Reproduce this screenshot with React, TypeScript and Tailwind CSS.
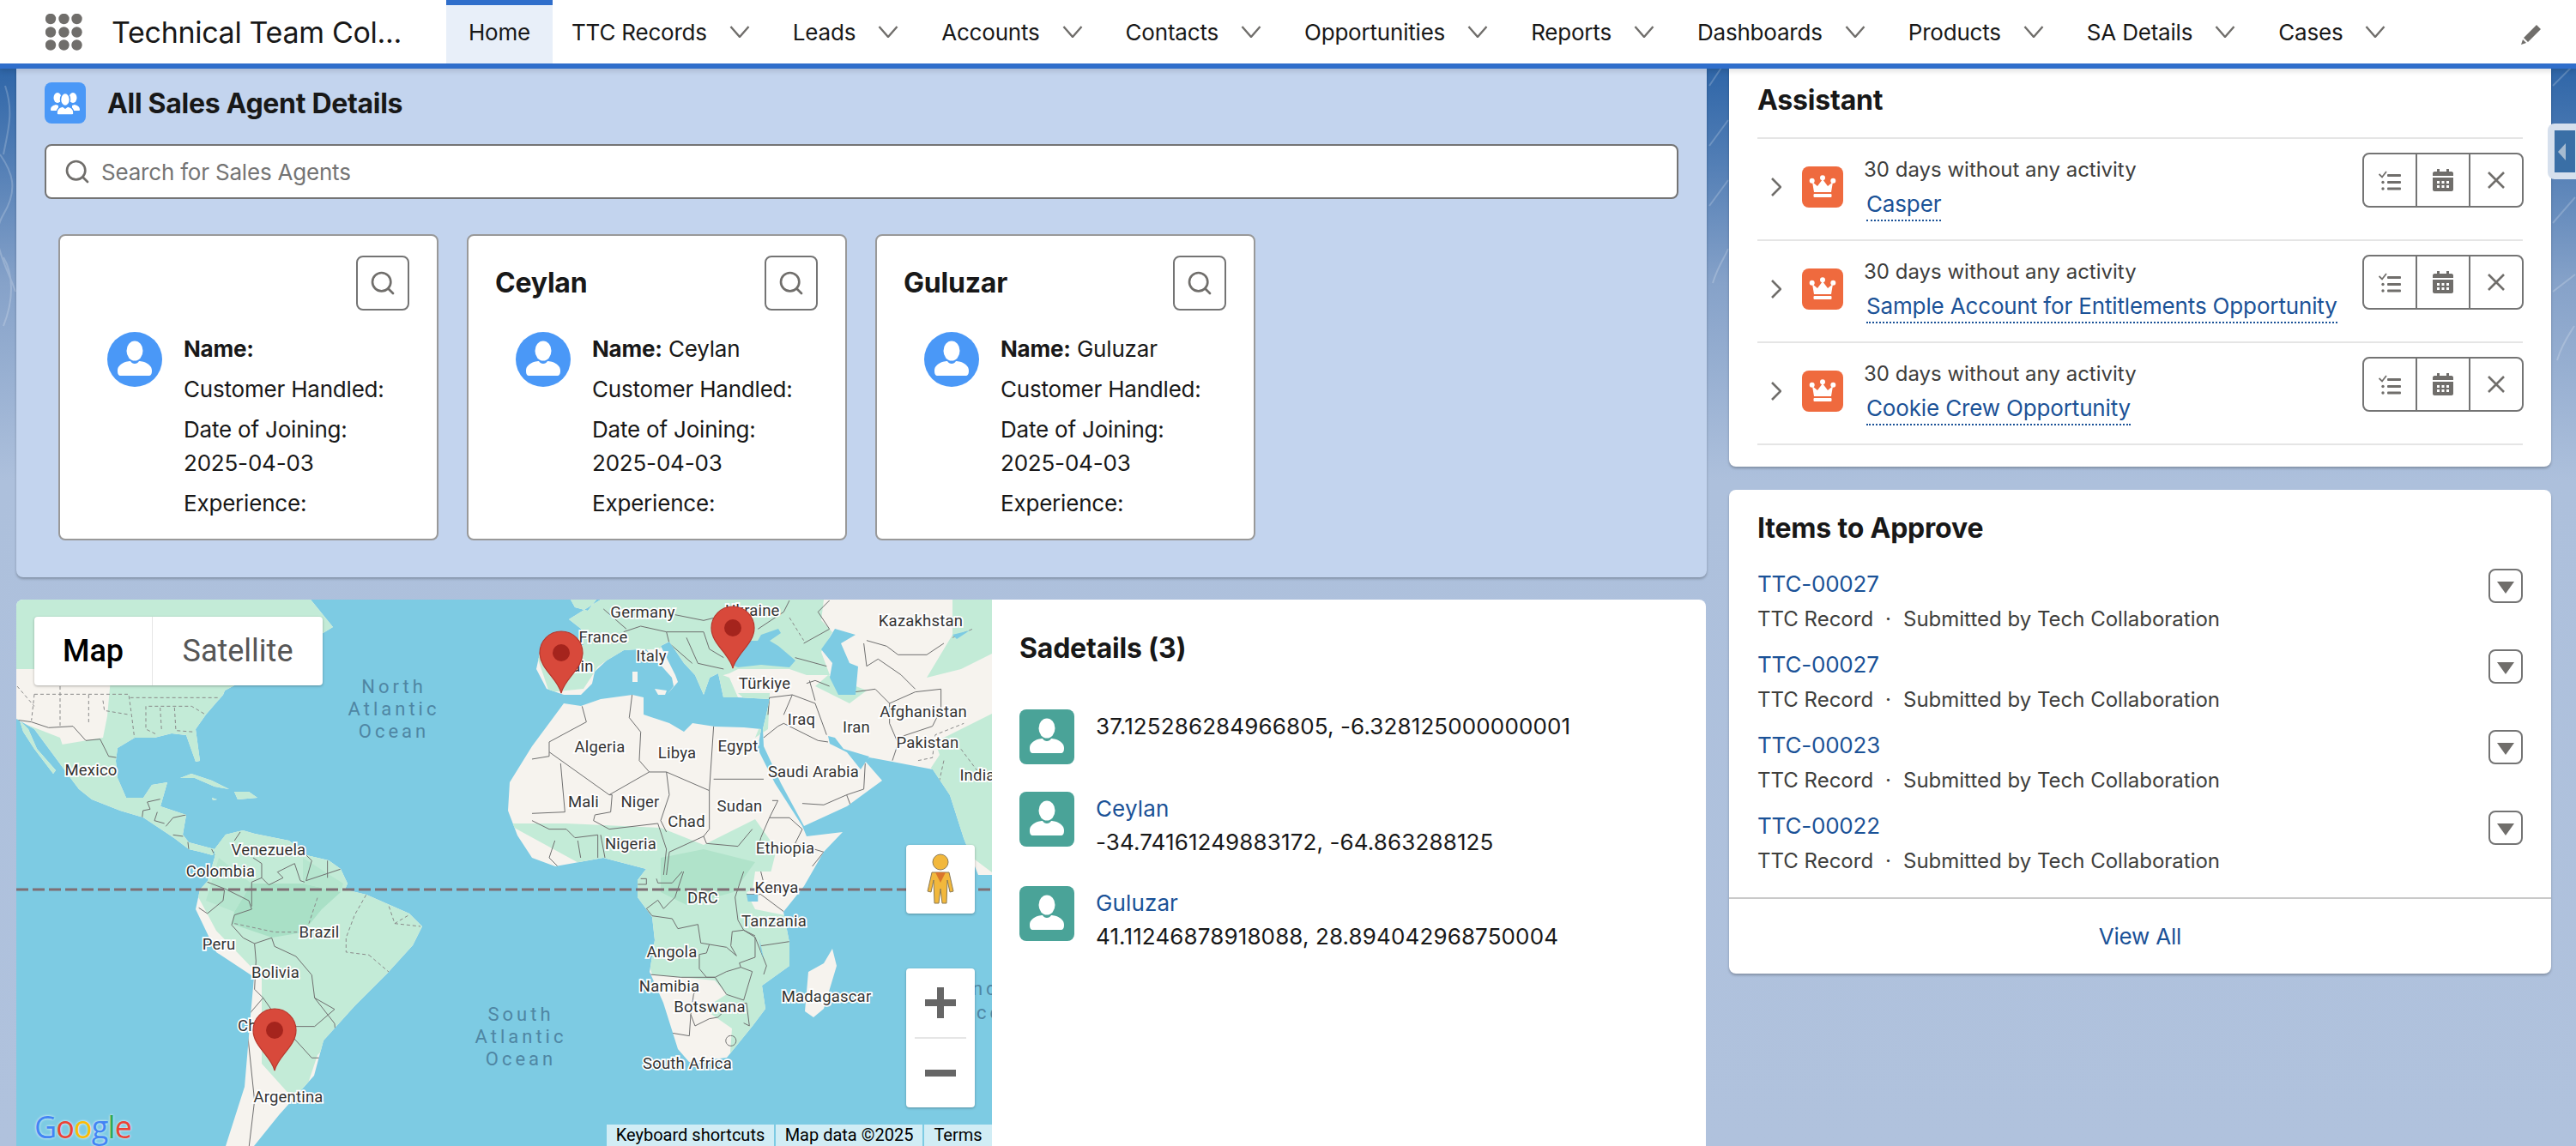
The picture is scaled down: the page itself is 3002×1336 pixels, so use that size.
import { Search } from "lucide-react"

const navItems = ["TTC Records", "Leads", "Accounts", "Contacts", "Opportunities", "Reports", "Dashboards", "Products", "SA Details", "Cases"]

const agents = [
  { name: "", label: "" },
  { name: "Ceylan", label: "Ceylan" },
  { name: "Guluzar", label: "Guluzar" },
]

const tasks = ["Casper", "Sample Account for Entitlements Opportunity", "Cookie Crew Opportunity"]

const approvals = ["TTC-00027", "TTC-00027", "TTC-00023", "TTC-00022"]

const mapLabels: [string, number, number][] = [
  ["Germany", 749, 713], ["Ukraine", 877, 711], ["Kazakhstan", 1073, 723], ["France", 703, 742],
  ["Italy", 759, 764], ["Spain", 668, 776], ["Türkiye", 891, 796], ["Afghanistan", 1076, 829],
  ["Iraq", 934, 838], ["Iran", 998, 847], ["Pakistan", 1081, 865], ["Algeria", 699, 870],
  ["Libya", 789, 877], ["Egypt", 860, 869], ["Saudi Arabia", 948, 899], ["India", 1139, 903],
  ["Mexico", 106, 897], ["Mali", 680, 934], ["Niger", 746, 934], ["Sudan", 862, 939],
  ["Chad", 800, 957], ["Nigeria", 735, 983], ["Ethiopia", 915, 988], ["Venezuela", 313, 990],
  ["Colombia", 257, 1015], ["Kenya", 905, 1034], ["DRC", 819, 1046], ["Tanzania", 902, 1073],
  ["Brazil", 372, 1086], ["Peru", 255, 1100], ["Angola", 783, 1109], ["Bolivia", 321, 1133],
  ["Namibia", 780, 1149], ["Madagascar", 963, 1161], ["Botswana", 827, 1173], ["Chile", 298, 1195],
  ["South Africa", 801, 1239], ["Argentina", 336, 1278],
]

const oceanLabels: [string, number, number][] = [
  ["North", 459, 800], ["Atlantic", 459, 826], ["Ocean", 459, 852],
  ["South", 607, 1182], ["Atlantic", 607, 1208], ["Ocean", 607, 1234],
  ["Indian", 1165, 1152], ["Ocean", 1160, 1180],
]

// land outlines, page coordinates
const landPath = [
  // north + central america
  "M19,699 L362,699 L388,731 L340,760 L290,790 L262,805 L260,810 L240,833 L228,850 L233,887 L228,888 L217,857 L200,855 L180,860 L157,860 L137,872 L135,887 L137,907 L147,930 L167,930 L177,915 L195,912 L187,940 L217,950 L213,973 L220,982 L250,990 L248,997 L233,993 L220,990 L203,977 L167,953 L140,945 L107,932 L92,920 L77,900 L40,850 L19,838 Z",
  "M23,840 L33,850 L43,873 L65,898 L62,902 L40,873 L27,853 Z",
  "M210,907 L223,902 L247,910 L267,920 L250,917 L227,907 Z M273,923 L290,923 L300,930 L277,932 Z M247,930 L253,932 L248,933 Z",
  // south america
  "M250,990 L263,973 L283,968 L297,972 L337,980 L357,997 L383,1003 L397,1013 L405,1030 L402,1037 L427,1043 L477,1065 L492,1080 L481,1102 L451,1135 L414,1172 L377,1213 L366,1254 L325,1300 L296,1336 L263,1336 L285,1267 L292,1184 L296,1139 L252,1110 L228,1060 L233,1037 L242,1027 L250,1000 Z",
  // africa
  "M657,820 L677,823 L700,815 L737,810 L750,813 L750,833 L780,843 L797,853 L807,843 L833,847 L867,848 L887,850 L883,873 L903,913 L935,963 L940,975 L982,970 L960,993 L937,1033 L913,1063 L920,1099 L920,1126 L888,1149 L892,1176 L877,1196 L847,1233 L803,1238 L790,1223 L773,1169 L757,1133 L763,1096 L760,1069 L743,1046 L743,1026 L753,1013 L703,1000 L647,1010 L620,1000 L603,974 L592,945 L594,912 L620,870 L640,843 Z",
  // eurasia
  "M700,699 L663,722 L677,733 L680,752 L630,757 L625,780 L637,803 L657,810 L677,810 L690,797 L693,783 L707,770 L727,758 L743,757 L753,757 L767,772 L783,790 L785,800 L777,810 L790,795 L787,787 L777,767 L770,753 L780,748 L797,773 L810,787 L820,810 L827,790 L837,785 L843,813 L860,813 L897,815 L893,833 L889,850 L890,870 L910,913 L937,963 L987,940 L1028,910 L1008,887 L1013,883 L1040,888 L1087,897 L1107,927 L1123,977 L1140,1020 L1160,1020 L1160,699 Z",
  // islands
  "M970,1106 L975,1126 L960,1176 L948,1186 L938,1179 L942,1133 L960,1123 Z",
  "M737,783 L743,783 L743,795 L737,795 Z M763,803 L777,805 L775,810 L767,810 Z",
  "M665,699 L695,699 L685,712 L670,708 Z",
].join(" ")

// europe, africa north, middle east (origin 620,700 at 3x)
const bordersNorth = [
  "M60,530 L270,680 L410,600 L470,600 L620,665 L635,440",
  "M100,570 L115,740 L0,745",
  "M0,555 L60,545 L60,530",
  "M270,680 L280,680 L275,740 L220,750 L215,770 L270,800 L440,780",
  "M470,600 L480,680 L450,770 L470,810",
  "M620,665 L620,800 L600,825 L610,850 L720,860 L770,800",
  "M635,625 L810,625",
  "M350,330 L340,410 L380,460 L375,560 L410,600",
  "M175,370 L190,425 L60,495 L60,530",
  "M840,700 L860,700 L830,760 L800,830 L790,870",
  "M830,760 L900,760 L945,800 L920,850 L1020,880 L980,930",
  "M0,770 L60,800 L120,800 L150,830 L230,820 L230,900",
  "M80,840 L60,900 L90,930", "M160,840 L170,900", "M240,820 L255,900",
  "M440,780 L470,870 L460,960", "M600,825 L480,880 L470,960",
  "M945,710 L1020,715 L1100,680 L1115,720", "M1100,680 L1160,660 L1165,570",
  "M810,480 L860,440 L880,430 L1000,490 L1035,495",
  "M830,340 L910,330 L990,360 L1030,470", "M830,340 L825,400", "M880,400 L910,330",
  "M970,280 L990,350", "M1130,320 L1200,310 L1250,360 L1250,430 L1280,500 L1260,560",
  "M1250,360 L1340,320 L1430,310 L1430,380 L1400,440 L1280,480",
  "M1160,150 L1170,230 L1210,205 L1290,260 L1340,310",
  "M1170,140 L1240,160 L1280,190 L1380,190 L1440,150",
  "M960,290 L990,280 L1040,300",
  "M320,110 L380,90 L470,110 L600,110 L620,170 L670,200",
  "M470,110 L480,150 L560,220", "M540,130 L580,220 L670,240",
  "M250,30 L330,100", "M500,50 L600,70 L640,60", "M790,100 L880,40 L900,0",
  "M950,150 L1040,100 L1000,40 L1040,0", "M920,200 L1030,230",
]

const dashedNorth = ["M1350,560 L1400,550 L1410,470 L1510,430", "M1470,130 L1540,100", "M900,60 L950,140", "M1440,560 L1420,650", "M1500,520 L1560,600"]

// mexico, central america, south america (origin 20,800)
const bordersWest = [
  "M0,118 L50,125 L110,145 L195,140 L240,190 L290,185 L320,245 L350,250",
  "M500,395 L455,405 L465,430 L440,435 L437,460", "M490,440 L480,470 L515,480",
  "M590,450 L545,460 L520,490", "M545,520 L580,525", "M597,545 L600,572", "M680,570 L690,590",
  "M665,685 L730,710 L810,750 L820,780 L760,800 L750,835 L790,880 L830,900",
  "M780,510 L760,540",
  "M825,600 L855,620 L855,670 L820,685 L820,770",
  "M855,670 L880,695 L930,670 L910,650 L970,620 L990,680 L1005,685",
  "M1010,590 L1030,610 L1010,680 L1130,640", "M1085,610 L1085,670",
  "M725,712 L720,750 L665,795 L635,775",
  "M890,880 L830,900 L835,960", "M890,880 L900,910 L975,945",
  "M975,945 L1030,1010 L1040,1090 L1110,1180 L1120,1300",
  "M835,960 L830,1060 L860,1090 L800,1160 L830,1450 L800,1700",
  "M1040,1090 L1110,1130 L1040,1190 L930,1190 L860,1090",
  "M930,1190 L1030,1300 L1120,1300",
]

const dashedWest = [
  "M60,28 L390,28 L400,100 L410,180", "M150,0 L150,140", "M250,30 L250,130",
  "M300,50 L305,85 L395,100", "M460,70 L610,70 L660,100", "M395,40 L710,40",
  "M450,70 L450,150 L490,170", "M500,75 L505,155", "M550,75 L555,155 L620,160",
  "M760,830 L900,860 L1000,860", "M1050,740 L1020,830", "M1220,730 L1180,800 L1150,880 L1150,930 L1230,940",
  "M1300,770 L1320,830 L1370,800", "M1320,830 L1410,840", "M1230,940 L1300,1000 L1350,1150",
  "M60,28 L50,120", "M0,0 L60,70",
]

// southern africa (origin 620,1016)
const bordersSouth = [
  "M380,25 L400,25 L400,45 L370,45", "M435,25 L440,40 L490,40 L525,0",
  "M530,0 L500,90 L460,130 L440,100 L400,130 L420,155",
  "M420,155 L490,165 L510,200 L580,185 L590,250 L620,255 L610,285 L585,290 L585,340 L610,370 L640,370 L680,430 L740,450 L770,350 L730,335 L725,320 L780,300 L780,230 L740,205 L700,210 L695,260 L715,295 L680,265 L620,255",
  "M410,360 L520,370 L640,370", "M570,420 L565,430 L555,500 L550,575 L490,565",
  "M555,500 L570,540 L620,515 L650,510 L690,470 L750,460 L760,540 L740,530",
  "M730,335 L680,350 L640,370", "M780,230 L820,330 L810,360", "M800,260 L900,245",
  "M740,0 L710,90 L720,170 L740,205 L780,225", "M750,80 L800,80 L880,140", "M800,0 L810,40",
  "M695,574 a18,18 0 1,0 1,0",
]

function Chevron() {
  return (
    <svg viewBox="0 0 24 14" className="w-6 h-[14px] shrink-0" fill="none" stroke="#706e6b" strokeWidth="2.4">
      <path d="M1.5 1 L12 13 L22.5 1" />
    </svg>
  )
}

function AppGrid() {
  const pts = [6, 21.5, 36.5]
  return (
    <svg viewBox="0 0 43 43" className="w-[43px] h-[43px]" fill="#706e6b">
      {pts.map((y) => pts.map((x) => <circle key={`${x}-${y}`} cx={x} cy={y} r="6.2" />))}
    </svg>
  )
}

function PersonGlyph({ className }: { className: string }) {
  return (
    <svg viewBox="0 0 64 64" className={className} fill="#fff">
      <ellipse cx="32" cy="22" rx="9.5" ry="11.5" />
      <path d="M12 45c0-5 4-8 9-10 3-1 5-1 6-1 1 2 3 3 5 3s4-1 5-3c1 0 3 0 6 1 5 2 9 5 9 10 0 4-1 6-4 6H16c-3 0-4-2-4-6z" />
    </svg>
  )
}

function GroupGlyph() {
  return (
    <svg viewBox="0 0 48 48" className="w-12 h-12" fill="#fff">
      <ellipse cx="15" cy="18" rx="4.5" ry="6" />
      <ellipse cx="33" cy="18" rx="4.5" ry="6" />
      <path d="M7 32c0-4 3-5 6-6l3 1v6H9c-1 0-2 0-2-1zM41 32c0-4-3-5-6-6l-3 1v6h7c1 0 2 0 2-1z" />
      <ellipse cx="24" cy="20" rx="5.5" ry="7.5" stroke="#4a98f7" strokeWidth="1.5" />
      <path d="M14 36c0-6 4-7 7-8l3 2 3-2c3 1 7 2 7 8 0 2-1 2-2 2H16c-1 0-2 0-2-2z" stroke="#4a98f7" strokeWidth="1.5" />
    </svg>
  )
}

function Crown() {
  return (
    <svg viewBox="0 0 48 48" className="w-12 h-12" fill="#fff">
      <circle cx="11.7" cy="16.7" r="3" />
      <circle cx="24" cy="13.3" r="3" />
      <circle cx="36.3" cy="16.7" r="3" />
      <path d="M12 18l6 5 6-8 6 8 6-5-2 12H14z" />
      <rect x="13.5" y="32" width="21" height="4" rx="1" />
    </svg>
  )
}

function TaskIcon() {
  return (
    <svg viewBox="0 0 26 23" className="w-[26px] h-[23px]" fill="#706e6b">
      <path d="M0.5 4l3.5 3.5L9 1" fill="none" stroke="#706e6b" strokeWidth="1.8" />
      <rect x="10" y="4" width="16" height="3" rx="1" />
      <rect x="10" y="12" width="16" height="3" rx="1" />
      <rect x="10" y="19.5" width="16" height="3" rx="1" />
      <circle cx="5" cy="13.5" r="1.7" />
      <circle cx="5" cy="21" r="1.7" />
    </svg>
  )
}

function CalendarIcon() {
  return (
    <svg viewBox="0 0 24 26" className="w-6 h-[26px]" fill="#706e6b">
      <rect x="5" y="0" width="3" height="4" />
      <rect x="16" y="0" width="3" height="4" />
      <path d="M0 5c0-1 1-2 2-2h20c1 0 2 1 2 2v3H0z" />
      <path fillRule="evenodd" d="M0 10h24v14c0 1-1 2-2 2H2c-1 0-2-1-2-2zM5 14v3h3v-3zm5.5 0v3h3v-3zm5.5 0v3h3v-3zM5 19v3h3v-3zm5.5 0v3h3v-3zm5.5 0v3h3v-3z" />
    </svg>
  )
}

function CloseIcon() {
  return (
    <svg viewBox="0 0 20 20" className="w-5 h-5" fill="none" stroke="#706e6b" strokeWidth="2.6">
      <path d="M1 1l18 18M19 1L1 19" />
    </svg>
  )
}

function Pin({ x, y }: { x: number; y: number }) {
  return (
    <svg viewBox="0 0 52 74" className="absolute w-[52px] h-[74px]" style={{ left: x, top: y }}>
      <path d="M26 73C22 56 1 45 1 26a25 25 0 0 1 50 0c0 19-21 30-25 47z" fill="#d8493b" stroke="#b8362c" strokeWidth="1.2" />
      <ellipse cx="26" cy="26" rx="10" ry="10" fill="#a5241d" />
    </svg>
  )
}

function BorderLines({ lines, dashed }: { lines: string[]; dashed?: boolean }) {
  return (
    <>
      {lines.map((d, i) => (
        <path key={i} d={d} fill="none" stroke={dashed ? "#8a8a8a" : "#6f6f6f"} strokeWidth="1" strokeDasharray={dashed ? "4 3" : undefined} vectorEffect="non-scaling-stroke" />
      ))}
    </>
  )
}

function WorldMap() {
  return (
    <svg viewBox="0 0 1137 637" className="absolute inset-0 w-[1137px] h-[637px]">
      <defs>
        <clipPath id="land"><path d={landPath} /></clipPath>
      </defs>
      <rect width="1137" height="637" fill="#7dcbe3" />
      <g transform="translate(-19,-699)">
        <path d={landPath} fill="#f6f3ee" />
        <g clipPath="url(#land)">
          {/* north + central america */}
          <path fill="#c3ebd7" d="M19,699 L400,699 L400,1000 L200,1000 L90,930 L60,870 L120,860 L125,835 L130,780 L19,780 Z" />
          <path fill="#c3ebd7" d="M19,840 L70,860 L90,920 L60,910 Z" />
          {/* south america */}
          <path fill="#c3ebd7" d="M250,960 L500,1040 L500,1100 L370,1230 L350,1290 L305,1240 L305,1140 L252,1085 L228,1040 Z" />
          <path fill="#a9e0c6" d="M293,1030 L353,1030 L397,1040 L375,1060 L353,1087 L317,1093 L270,1077 L273,1063 Z" />
          <path fill="#b6e6cf" d="M255,1000 L293,1030 L273,1063 L240,1050 Z M353,1000 L400,1030 L397,1040 L353,1030 Z" />
          {/* africa */}
          <path fill="#c3ebd7" d="M590,960 L660,960 L770,965 L820,985 L880,955 L905,990 L895,1030 L870,1040 L880,1060 L930,1070 L930,1240 L850,1240 L853,1199 L820,1176 L847,1159 L833,1143 L760,1136 L730,1040 L700,1020 Z" />
          <path fill="#b0e3ca" d="M770,1000 L820,990 L880,1005 L855,1040 L800,1055 L770,1040 Z" />
          <path fill="#f6f3ee" d="M880,1016 L930,1016 L925,1045 L890,1060 L875,1050 Z" />
          {/* eurasia */}
          <path fill="#c3ebd7" d="M640,699 L960,699 L957,723 L970,737 L957,760 L967,787 L940,787 L920,780 L860,780 L850,785 L833,790 L820,810 L807,793 L780,750 L767,757 L747,757 L707,770 L697,777 L680,803 L640,807 L623,757 Z" />
          <path fill="#c3ebd7" d="M837,785 L850,790 L860,813 L843,815 Z M860,808 L897,808 L895,850 L880,860 L890,835 Z" />
          <path fill="#c3ebd7" d="M1110,699 L1160,699 L1160,760 L1120,780 L1080,790 L1110,740 Z" />
          <path fill="#c3ebd7" d="M1090,865 L1160,830 L1160,1020 L1120,990 L1095,925 L1085,895 L1095,880 Z" />
          <path fill="#c3ebd7" d="M965,787 L1010,805 L990,820 L950,800 Z" />
        </g>
        {/* borders stay on land */}
        <g clipPath="url(#land)">
          <g transform="translate(620,700) scale(.3333)">
            <BorderLines lines={bordersNorth} />
            <BorderLines lines={dashedNorth} dashed />
          </g>
          <g transform="translate(20,800) scale(.3333)">
            <BorderLines lines={bordersWest} />
            <BorderLines lines={dashedWest} dashed />
          </g>
          <g transform="translate(620,1016) scale(.3333)">
            <BorderLines lines={bordersSouth} />
            <path d="M750,80 L790,80 L790,105 L755,105 Z M795,235 L810,305 L800,280 Z" fill="#7dcbe3" />
          </g>
        </g>
        {/* seas */}
        <path fill="#7dcbe3" d="M853,775 L847,757 L860,747 L883,747 L887,740 L907,733 L910,738 L897,747 L907,753 L927,770 L920,778 L887,775 L860,778 Z" />
        <path fill="#7dcbe3" d="M973,733 L997,740 L980,750 L990,773 L1000,777 L997,810 L977,810 L967,790 L970,773 L957,757 L967,743 Z" />
        <path fill="#7dcbe3" d="M965,858 L973,860 L983,873 L1013,882 L1003,897 L987,877 L967,867 Z" />
        <path fill="#7dcbe3" d="M1110,740 L1130,735 L1115,745 Z" />
      </g>
      <line x1="0" x2="1137" y1="338" y2="338" stroke="#7f6f74" strokeWidth="3" strokeDasharray="14 5" />
      <g fontFamily="Roboto, sans-serif" fontSize="18.5" textAnchor="middle" fill="#333" stroke="#fff" strokeWidth="3.5" paintOrder="stroke" letterSpacing="0.2">
        {mapLabels.map(([t, x, y]) => (
          <text key={t} x={x - 19} y={y - 699 + 7}>{t}</text>
        ))}
      </g>
      <g fontFamily="Roboto, sans-serif" fontSize="22" textAnchor="middle" fill="#4f86a3" letterSpacing="4">
        {oceanLabels.map(([t, x, y]) => (
          <text key={`${t}-${x}-${y}`} x={x - 19} y={y - 699 + 8}>{t}</text>
        ))}
      </g>
    </svg>
  )
}

function AgentCard({ name, label }: { name: string; label: string }) {
  return (
    <div className="w-[443px] h-[357px] bg-white border-2 border-[#999] rounded-lg shrink-0">
      <div className="flex justify-between items-center pt-[23px] pl-[31px] pr-[32px]">
        <h3 className="text-[32px] leading-10 font-bold text-[#181818]">{name}</h3>
        <button className="w-[62px] h-[64px] flex items-center justify-center border-2 border-[#747474] rounded-lg bg-white">
          <Search className="w-8 h-8 text-[#706e6b]" strokeWidth={2} />
        </button>
      </div>
      <div className="flex mt-[25px] pl-[55px]">
        <div className="w-16 h-16 rounded-full bg-[#4a98f7] shrink-0">
          <PersonGlyph className="w-16 h-16" />
        </div>
        <div className="ml-[25px] flex flex-col gap-2 text-[26px] leading-[39px] text-[#181818] whitespace-nowrap">
          <p><b className="font-bold">Name:</b>{label && ` ${label}`}</p>
          <p>Customer Handled:</p>
          <p>Date of Joining:<br />2025-04-03</p>
          <p>Experience:</p>
        </div>
      </div>
    </div>
  )
}

export default function App() {
  return (
    <div className="relative w-[3002px] h-[1336px] overflow-hidden bg-[linear-gradient(180deg,#2f66a8_80px,#4f7cb4_180px,#86a2c9_330px,#adc0dc_560px,#b0c2dd_100%)] [font-family:Inter,sans-serif] tracking-[-0.2px] text-[#181818]">
      <svg className="absolute inset-0 w-full h-[500px] opacity-20" viewBox="0 0 3002 500" fill="none" stroke="#fff" strokeWidth="2">
        <path d="M0 180c14 20 22 40 4 70s4 60 14 90M6 100c10 30 4 50-2 80M4 300c12 20 12 50 0 80" />
        <path d="M1992 100l20-30M1992 170l22-30M1992 240l22-30M1996 330c6-20 14-30 18-40" />
        <path d="M2975 100l24-24M2975 260l26-30M2975 340l26-20M2980 420c6-20 14-30 20-40" />
      </svg>

      {/* top nav */}
      <header className="relative z-10 h-20 bg-white border-b-[6px] border-[#2f6ecb] flex items-stretch shadow-[0_3px_6px_rgba(0,0,0,.12)]">
        <div className="w-[520px] shrink-0 flex items-center pl-[53px]">
          <AppGrid />
          <span className="ml-[34px] text-[34px] tracking-[-0.3px] text-[#181818] whitespace-nowrap">Technical Team Col...</span>
        </div>
        <div className="w-[124px] shrink-0 bg-[#e8eff9] border-t-[6px] border-[#2f6ecb] flex items-center justify-center text-[26px] pb-[6px]">Home</div>
        <nav className="flex items-center pl-[22px] text-[26px] whitespace-nowrap">
          {navItems.map((item) => (
            <div key={item} className="flex items-center gap-[26px] mr-[50px]">
              <span>{item}</span>
              <Chevron />
            </div>
          ))}
        </nav>
        <svg viewBox="0 0 26 26" className="absolute left-[2937px] top-[27px] w-[26px] h-[26px]" fill="#706e6b">
          <path d="M19 2l5 5L9 22l-5-5zM3 19l4 4-6 2z" />
        </svg>
      </header>

      {/* docked utility tab */}
      <div className="absolute z-10 left-[2969px] top-[144px] w-[40px] h-[65px] rounded-l-lg border-[8px] border-[#f2f5f9d9] bg-[#3a6fa6] flex items-center pl-1">
        <div className="w-0 h-0 border-y-[10px] border-y-transparent border-r-[9px] border-r-[#a6bbd0]" />
      </div>

      <main className="relative flex pl-[19px] gap-[26px]">
        <div className="w-[1970px] shrink-0 flex flex-col gap-[26px]">
          {/* sales agents */}
          <section className="h-[593px] bg-[#c3d4ee] rounded-b-lg shadow-[0_2px_3px_rgba(0,0,0,.25)] pt-4 pl-[33px] pr-[33px]">
            <div className="flex items-center gap-[25px]">
              <div className="w-12 h-12 rounded-lg bg-[#4a98f7]">
                <GroupGlyph />
              </div>
              <h2 className="mt-[2px] text-[32px] leading-10 font-bold tracking-[-0.3px]">All Sales Agent Details</h2>
            </div>
            <div className="mt-6 h-16 bg-white border-2 border-[#747474] rounded-lg flex items-center pl-5">
              <Search className="w-8 h-8 text-[#706e6b]" strokeWidth={2} />
              <span className="ml-3 text-[26px] text-[#747474]">Search for Sales Agents</span>
            </div>
            <div className="mt-[41px] pl-4 flex gap-[33px]">
              {agents.map((a) => (
                <AgentCard key={a.name || "blank"} name={a.name} label={a.label} />
              ))}
            </div>
          </section>

          {/* map and list */}
          <section className="h-[637px] w-[1969px] flex bg-white rounded-t-lg overflow-hidden">
            <div className="relative w-[1137px] shrink-0 overflow-hidden tracking-normal [font-family:Roboto,sans-serif]">
              <WorldMap />
              <Pin x={609} y={36} />
              <Pin x={809} y={7} />
              <Pin x={275} y={476} />
              <div className="absolute left-[21px] top-[20px] h-20 flex bg-white rounded-sm shadow-[0_1px_3px_rgba(0,0,0,.3)] text-[36px]">
                <div className="w-[138px] flex items-center justify-center font-medium text-black border-r border-[#e6e6e6]">Map</div>
                <div className="w-[198px] flex items-center justify-center text-[#565656]">Satellite</div>
              </div>
              <div className="absolute left-[1037px] top-[286px] w-20 h-20 bg-white rounded-sm shadow-[0_1px_3px_rgba(0,0,0,.3)] flex items-center justify-center">
                <svg viewBox="0 0 36 60" className="w-9 h-[60px]" fill="#f2b83c" stroke="#8a7a55" strokeWidth="1">
                  <circle cx="18" cy="10" r="9" />
                  <path d="M8 22h20l5 22-4 1-3-14-1 27h-5l-2-17-2 17h-5L10 31 7 45l-4-1z" />
                  <path d="M12 22h12l-6 12z" fill="#d9752c" stroke="none" />
                </svg>
              </div>
              <div className="absolute left-[1037px] top-[430px] w-20 h-[162px] bg-white rounded-sm shadow-[0_1px_3px_rgba(0,0,0,.3)] flex flex-col items-center">
                <div className="h-20 w-full flex items-center justify-center">
                  <svg viewBox="0 0 36 36" className="w-9 h-9" fill="#666"><path d="M14 0h8v14h14v8H22v14h-8V22H0v-8h14z" /></svg>
                </div>
                <div className="w-[60px] h-[2px] bg-[#e6e6e6]" />
                <div className="h-20 w-full flex items-center justify-center">
                  <svg viewBox="0 0 36 8" className="w-9 h-2" fill="#666"><rect width="36" height="8" /></svg>
                </div>
              </div>
              <div className="absolute left-[21px] bottom-[2px] text-[36px] leading-10 font-medium tracking-tight [font-family:'Open_Sans',sans-serif] [text-shadow:0_0_3px_#fff]">
                <span className="text-[#4285f4]">G</span>
                <span className="text-[#ea4335]">o</span>
                <span className="text-[#fbbc05]">o</span>
                <span className="text-[#4285f4]">g</span>
                <span className="text-[#34a853]">l</span>
                <span className="text-[#ea4335]">e</span>
              </div>
              <div className="absolute right-0 bottom-0 h-[25px] flex gap-[2px] text-[20px] leading-[25px] text-black">
                <span className="bg-[#ffffffa6] w-[195px] text-center">Keyboard shortcuts</span>
                <span className="bg-[#ffffffa6] w-[171px] text-center">Map data ©2025</span>
                <span className="bg-[#ffffffa6] w-[79px] text-center">Terms</span>
              </div>
            </div>
            <div className="flex-1 pl-8 pt-[37px] tracking-normal">
              <h2 className="text-[32px] leading-10 font-bold tracking-[-0.2px]">Sadetails (3)</h2>
              <div className="mt-[51px] flex flex-col text-[26px] leading-[39px] tracking-[0.12px]">
                <div className="h-[96px] flex gap-[25px]">
                  <div className="w-16 h-16 rounded-lg bg-[#4aa398]"><PersonGlyph className="w-16 h-16" /></div>
                  <p>37.125286284966805, -6.328125000000001</p>
                </div>
                <div className="h-[110px] flex gap-[25px]">
                  <div className="w-16 h-16 rounded-lg bg-[#4aa398]"><PersonGlyph className="w-16 h-16" /></div>
                  <p>
                    <a className="text-[#1b5297]">Ceylan</a><br />-34.74161249883172, -64.863288125
                  </p>
                </div>
                <div className="h-[110px] flex gap-[25px]">
                  <div className="w-16 h-16 rounded-lg bg-[#4aa398]"><PersonGlyph className="w-16 h-16" /></div>
                  <p>
                    <a className="text-[#1b5297]">Guluzar</a><br />41.11246878918088, 28.894042968750004
                  </p>
                </div>
              </div>
            </div>
          </section>
        </div>

        <aside className="w-[958px] shrink-0 flex flex-col gap-[27px]">
          {/* assistant */}
          <section className="h-[464px] bg-white rounded-b-lg shadow-[0_2px_3px_rgba(0,0,0,.25)] px-[33px]">
            <div className="h-[82px] pt-[17px] border-b-2 border-[#e5e5e5]">
              <h2 className="text-[32px] leading-10 font-bold">Assistant</h2>
            </div>
            {tasks.map((t) => (
              <div key={t} className="h-[119px] border-b-2 border-[#e5e5e5] flex items-start">
                <svg viewBox="0 0 12 22" className="ml-4 mt-[45px] w-3 h-[22px] shrink-0" fill="none" stroke="#706e6b" strokeWidth="2.6">
                  <path d="M1 1l10 10L1 21" />
                </svg>
                <div className="ml-6 mt-8 w-12 h-12 rounded-lg bg-[#ef6a3e] shrink-0"><Crown /></div>
                <div className="ml-6 mt-4 flex-1">
                  <p className="text-[24px] leading-[39px] tracking-normal text-[#3e3e3c]">30 days without any activity</p>
                  <a className="ml-[3px] mt-[3px] inline-block text-[26px] leading-[36px] tracking-[-0.15px] text-[#1b5297] border-b-2 border-dotted border-[#1b5297]">{t}</a>
                </div>
                <div className="mt-4 -mr-px h-16 w-[188px] shrink-0 flex border-2 border-[#747474] rounded-lg bg-white divide-x-2 divide-[#747474]">
                  <div className="flex-1 flex items-center justify-center"><TaskIcon /></div>
                  <div className="flex-1 flex items-center justify-center"><CalendarIcon /></div>
                  <div className="flex-1 flex items-center justify-center"><CloseIcon /></div>
                </div>
              </div>
            ))}
          </section>

          {/* approvals */}
          <section className="h-[564px] bg-white rounded-lg shadow-[0_2px_3px_rgba(0,0,0,.25)]">
            <div className="h-[92px] pt-[25px] px-[33px]">
              <h2 className="text-[32px] leading-10 font-bold">Items to Approve</h2>
            </div>
            <div className="px-[33px] h-[383px]">
              {approvals.map((id, i) => (
                <div key={`${id}-${i}`} className="h-[94px] flex justify-between items-start leading-9">
                  <div>
                    <a className="block text-[26px] text-[#1b5297]">{id}</a>
                    <p className="mt-[5px] text-[24px] tracking-normal text-[#3e3e3c] flex">
                      <span>TTC Record</span>
                      <span className="mx-[14px]">·</span>
                      <span>Submitted by Tech Collaboration</span>
                    </p>
                  </div>
                  <button className="w-10 h-10 flex items-center justify-center border-2 border-[#747474] rounded-lg">
                    <div className="w-0 h-0 mt-1 border-x-[10px] border-x-transparent border-t-[14px] border-t-[#706e6b]" />
                  </button>
                </div>
              ))}
            </div>
            <div className="h-[89px] border-t-2 border-[#c9c9c9] flex items-center justify-center text-[26px] text-[#1b5297]">View All</div>
          </section>
        </aside>
      </main>
    </div>
  )
}
